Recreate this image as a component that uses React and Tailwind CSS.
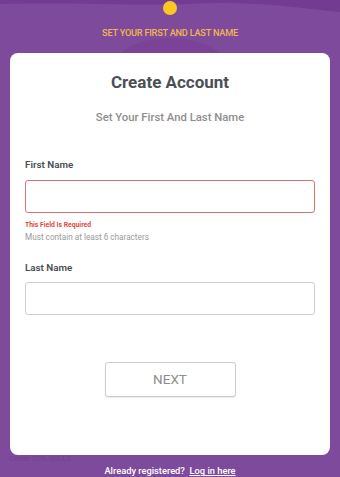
const Field = ({ label, error, hint, gap = 'mt-[11px]' }) => (
  <div>
    <label className="block text-[9.8px] font-semibold text-[#4a4d52] leading-none">{label}</label>
    <div
      className={`${gap} h-[33px] rounded-[3px] border bg-white ${
        error ? 'border-[#d9756f]' : 'border-[#cfcfd2]'
      }`}
    />
    {error && (
      <div className="mt-[9px]">
        <p className="text-[6.8px] font-bold text-[#e0483e] leading-none">{error}</p>
        <p className="mt-[4px] text-[8.2px] text-[#9a9a9a] leading-none">{hint}</p>
      </div>
    )}
  </div>
);

export default function App() {
  return (
    <div
      className="relative h-[477px] w-[340px] overflow-hidden bg-[#7e4a9c]"
      style={{ fontFamily: 'Roboto, "Liberation Sans", sans-serif' }}
    >
      {/* background decoration */}
      <svg className="absolute left-0 top-0" width="340" height="60" viewBox="0 0 340 60">
        <path d="M0 0 H340 V12 C300 8 250 0 190 4 C140 6 60 2 0 4 Z" fill="#733c92" />
        <path d="M115 60 C125 44 150 38 170 38 C190 38 215 44 225 60 Z" fill="#7a4398" />
      </svg>

      <div className="relative flex flex-col items-center">
        <div className="mt-[1px] h-[14px] w-[14px] rounded-full bg-[#f9c823]" />
        <p className="mt-[13px] text-[9.2px] font-medium uppercase tracking-tight text-[#f2b64c] leading-none">
          Set your first and last name
        </p>

        <div className="mt-[16px] h-[402px] w-[320px] rounded-[8px] bg-white px-[15px]">
          <h1 className="mt-[21px] text-center text-[17px] font-bold text-[#4b5057] leading-none">
            Create Account
          </h1>
          <p className="mt-[21px] text-center text-[11.3px] font-medium text-[#8e8e8e] leading-none">
            Set Your First And Last Name
          </p>

          <div className="mt-[36px]">
            <Field label="First Name" error="This Field Is Required" hint="Must contain at least 6 characters" />
          </div>
          <div className="mt-[22px]">
            <Field label="Last Name" gap="mt-[9px]" />
          </div>

          <div className="mt-[47px] flex justify-center">
            <button className="h-[35px] w-[131px] rounded-[3px] border border-[#cccccc] bg-white text-[13.5px] text-[#8c8c8c] shadow-[0_1px_1px_rgba(0,0,0,0.08)]">
              NEXT
            </button>
          </div>
        </div>

        <div className="relative w-full">
          <p className="absolute left-[9px] top-[0px] text-[8px] text-[#74409a] leading-none">Crede 50% WILL2</p>
          <p className="mt-[11px] text-center text-[9.3px] font-medium text-white leading-none">
            Already registered?&nbsp; <span className="underline">Log in here</span>
          </p>
        </div>
      </div>
    </div>
  );
}
